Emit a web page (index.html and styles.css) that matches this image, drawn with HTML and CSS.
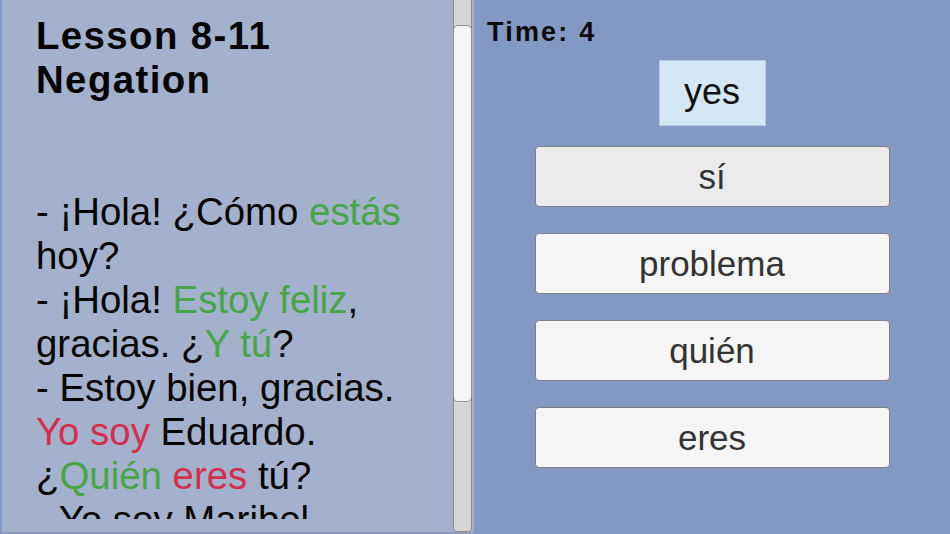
FILE: index.html
```html
<!DOCTYPE html>
<html lang="es">
<head>
    <meta charset="UTF-8">
    <meta name="viewport" content="width=device-width, initial-scale=1.0">
    <title>Lesson 8-11</title>
    <link rel="stylesheet" href="styles.css">
</head>
<body>
    <div class="leccion">
        <div class="texto">
            <div class="titulo">Lesson 8-11<br>Negation</div>
            <br><br>
            - ¡Hola! ¿Cómo <span class="verde">estás</span> hoy?<br>
            - ¡Hola! <span class="verde">Estoy feliz</span>, gracias. ¿<span class="verde">Y tú</span>?<br>
            - Estoy bien, gracias. <span class="rojo">Yo soy</span> Eduardo.<br>
            ¿<span class="verde">Quién</span> <span class="rojo">eres</span> tú?<br>
            - Yo soy Maribel.<br>
            - Mucho gusto.
        </div>
        <div class="barra">
            <div class="pulgar"></div>
        </div>
    </div>

    <div class="juego">
        <div class="tiempo">Time: 4</div>
        <div class="palabra">yes</div>
        <button class="opcion activa">sí</button>
        <button class="opcion">problema</button>
        <button class="opcion">quién</button>
        <button class="opcion">eres</button>
    </div>
</body>
</html>
```

FILE: styles.css
```css
body {
    margin: 0;
    height: 534px;
    display: flex;
    background-color: #8398c3;
    font-family: 'Liberation Sans', Arial, sans-serif;
    overflow: hidden;
}

.leccion {
    width: 472px;
    margin-left: 2px;
    display: flex;
    align-items: flex-start;
    background-color: #a3b1cc;
    border-bottom: 2px solid #8c9cc0;
    box-sizing: border-box;
}

.texto {
    width: 390px;
    padding: 14px 27px 0 34px;
    height: 505px;
    box-sizing: content-box;
    overflow: hidden;
    font-size: 38.4px;
    line-height: 44px;
    color: #050505;
}

.titulo {
    font-weight: bold;
    letter-spacing: 1.4px;
    color: #050505;
}

.verde {
    color: #46a646;
}

.rojo {
    color: #d52e4b;
}

.barra {
    width: 19px;
    margin-top: -4px;
    height: 536px;
    background-color: #d6d6d6;
    border: 1px solid #8a8a8a;
    border-radius: 4px;
    box-sizing: border-box;
}

.pulgar {
    margin-top: 29px;
    height: 375px;
    background-color: #f5f5f5;
    border-radius: 4px;
    box-shadow: 0 0 0 1px #8f8f8f;
}

.juego {
    flex: 1;
    display: flex;
    flex-direction: column;
    align-items: center;
    padding-top: 16px;
}

.tiempo {
    align-self: flex-start;
    margin-left: 13px;
    font-size: 27px;
    line-height: 32px;
    font-weight: bold;
    letter-spacing: 2.2px;
    color: #0a0a0a;
}

.palabra {
    margin-top: 12px;
    width: 107px;
    height: 66px;
    box-sizing: border-box;
    border: 1px solid #b3cbe4;
    background-color: #d3e8f4;
    font-size: 36px;
    line-height: 62px;
    text-align: center;
    color: #111;
}

.opcion {
    width: 355px;
    height: 61px;
    margin-top: 26px;
    font-family: 'Liberation Sans', Arial, sans-serif;
    font-size: 35px;
    color: #333;
    background-color: #f5f5f5;
    border: 1px solid #7f7f85;
    border-radius: 4px;
    padding: 0;
}

.activa {
    margin-top: 20px;
    background-color: #ebebeb;
}
```
